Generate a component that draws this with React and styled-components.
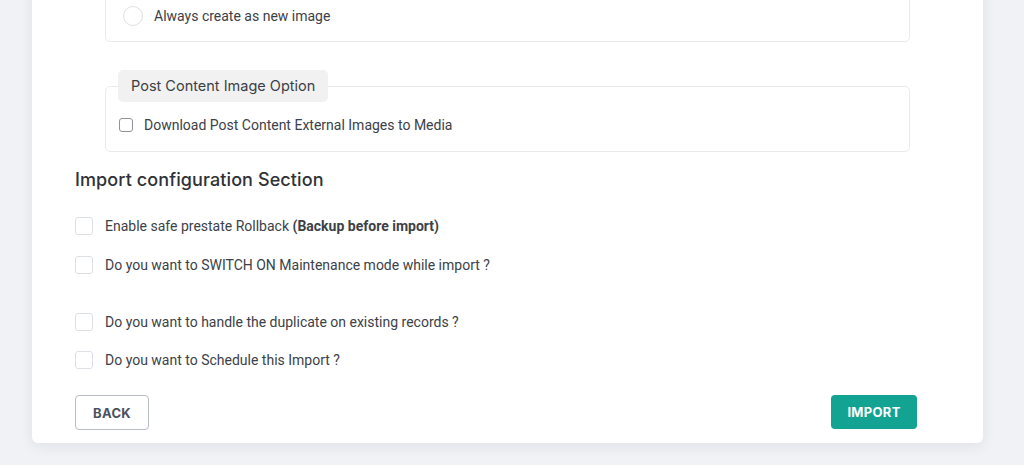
import React from 'react';
import styled, { createGlobalStyle } from 'styled-components';

const GlobalStyle = createGlobalStyle`
  html, body {
    margin: 0;
    padding: 0;
    background: #f0f2f5;
  }
  * { box-sizing: border-box; }
`;

const Page = styled.div`
  height: 100vh;
  overflow: hidden;
  display: flex;
  flex-direction: column;
  justify-content: flex-end;
  padding: 0 41px 22px 32px;
  font-family: Roboto, "Liberation Sans", sans-serif;
`;

const Card = styled.div`
  background: #fff;
  border-radius: 6px;
  box-shadow: 0 3px 14px rgba(30, 40, 70, 0.08);
  padding: 40px 66px 13px 43px;
  flex-shrink: 0;
`;

const OptionBox = styled.div`
  margin: 0 7px 0 30px;
  border: 1px solid #e9eaec;
  border-radius: 5px;
  padding: 15px 17px 15px;
`;

const Fieldset = styled.fieldset`
  margin: 28px 7px 0 30px;
  border: 1px solid #e9eaec;
  border-radius: 5px;
  padding: 13px 12px 16px;
  min-width: 0;
`;

const Legend = styled.legend`
  padding: 0 13px;
  height: 32px;
  line-height: 32px;
  background: #f1f1f1;
  border-radius: 5px;
  font-family: Inter, "Liberation Sans", sans-serif;
  font-size: 14.5px;
  color: #3b3f46;
`;

const Row = styled.label`
  display: flex;
  align-items: center;
  gap: ${({ $gap }) => $gap || 11}px;
  margin-top: ${({ $top }) => $top || 0}px;
  font-size: 14px;
  color: #3c4148;
  line-height: 20px;
`;

const Radio = styled.span`
  width: 20px;
  height: 20px;
  border-radius: 50%;
  border: 1px solid #dedfe2;
  background: #fff;
  flex-shrink: 0;
`;

const SmallCheck = styled.span`
  width: 14px;
  height: 14px;
  border-radius: 3px;
  border: 1.5px solid #8f9398;
  background: #fff;
  flex-shrink: 0;
  margin-left: 1px;
`;

const Check = styled.span`
  width: 18px;
  height: 18px;
  border-radius: 3px;
  border: 1px solid #dcdfe4;
  background: #fff;
  flex-shrink: 0;
`;

const Heading = styled.h2`
  margin: 16px 0 0;
  font-family: Inter, "Liberation Sans", sans-serif;
  font-size: 18px;
  line-height: 24px;
  font-weight: 500;
  color: #2f3237;
  letter-spacing: 0.1px;
`;

const ConfigList = styled.div`
  margin-top: 24px;
`;

const Actions = styled.div`
  display: flex;
  justify-content: space-between;
  align-items: flex-start;
  margin-top: 25px;
`;

const Button = styled.button`
  font-family: Inter, "Liberation Sans", sans-serif;
  font-size: 13px;
  font-weight: 700;
  letter-spacing: 0.3px;
  border-radius: 4px;
  cursor: pointer;
  height: ${({ $primary }) => ($primary ? 34 : 35)}px;
  width: ${({ $primary }) => ($primary ? 86 : 74)}px;
  background: ${({ $primary }) => ($primary ? '#13a392' : '#fff')};
  color: ${({ $primary }) => ($primary ? '#fff' : '#4a5260')};
  border: ${({ $primary }) => ($primary ? 'none' : '1px solid #b9bec6')};
`;

const configOptions = [
  { id: 'rollback', top: 0, label: <>Enable safe prestate Rollback <b>(Backup before import)</b></> },
  { id: 'maintenance', top: 19, label: 'Do you want to SWITCH ON Maintenance mode while import ?' },
  { id: 'duplicate', top: 37, label: 'Do you want to handle the duplicate on existing records ?' },
  { id: 'schedule', top: 18, label: 'Do you want to Schedule this Import ?' },
];

export default function App() {
  return (
    <>
      <GlobalStyle />
      <Page>
        <Card>
          <OptionBox>
            <Row>
              <Radio />
              Always create as new image
            </Row>
          </OptionBox>

          <Fieldset>
            <Legend>Post Content Image Option</Legend>
            <Row $gap={11}>
              <SmallCheck />
              Download Post Content External Images to Media
            </Row>
          </Fieldset>

          <Heading>Import configuration Section</Heading>

          <ConfigList>
            {configOptions.map((opt) => (
              <Row key={opt.id} $top={opt.top} $gap={12}>
                <Check />
                <span>{opt.label}</span>
              </Row>
            ))}
          </ConfigList>

          <Actions>
            <Button>BACK</Button>
            <Button $primary>IMPORT</Button>
          </Actions>
        </Card>
      </Page>
    </>
  );
}
